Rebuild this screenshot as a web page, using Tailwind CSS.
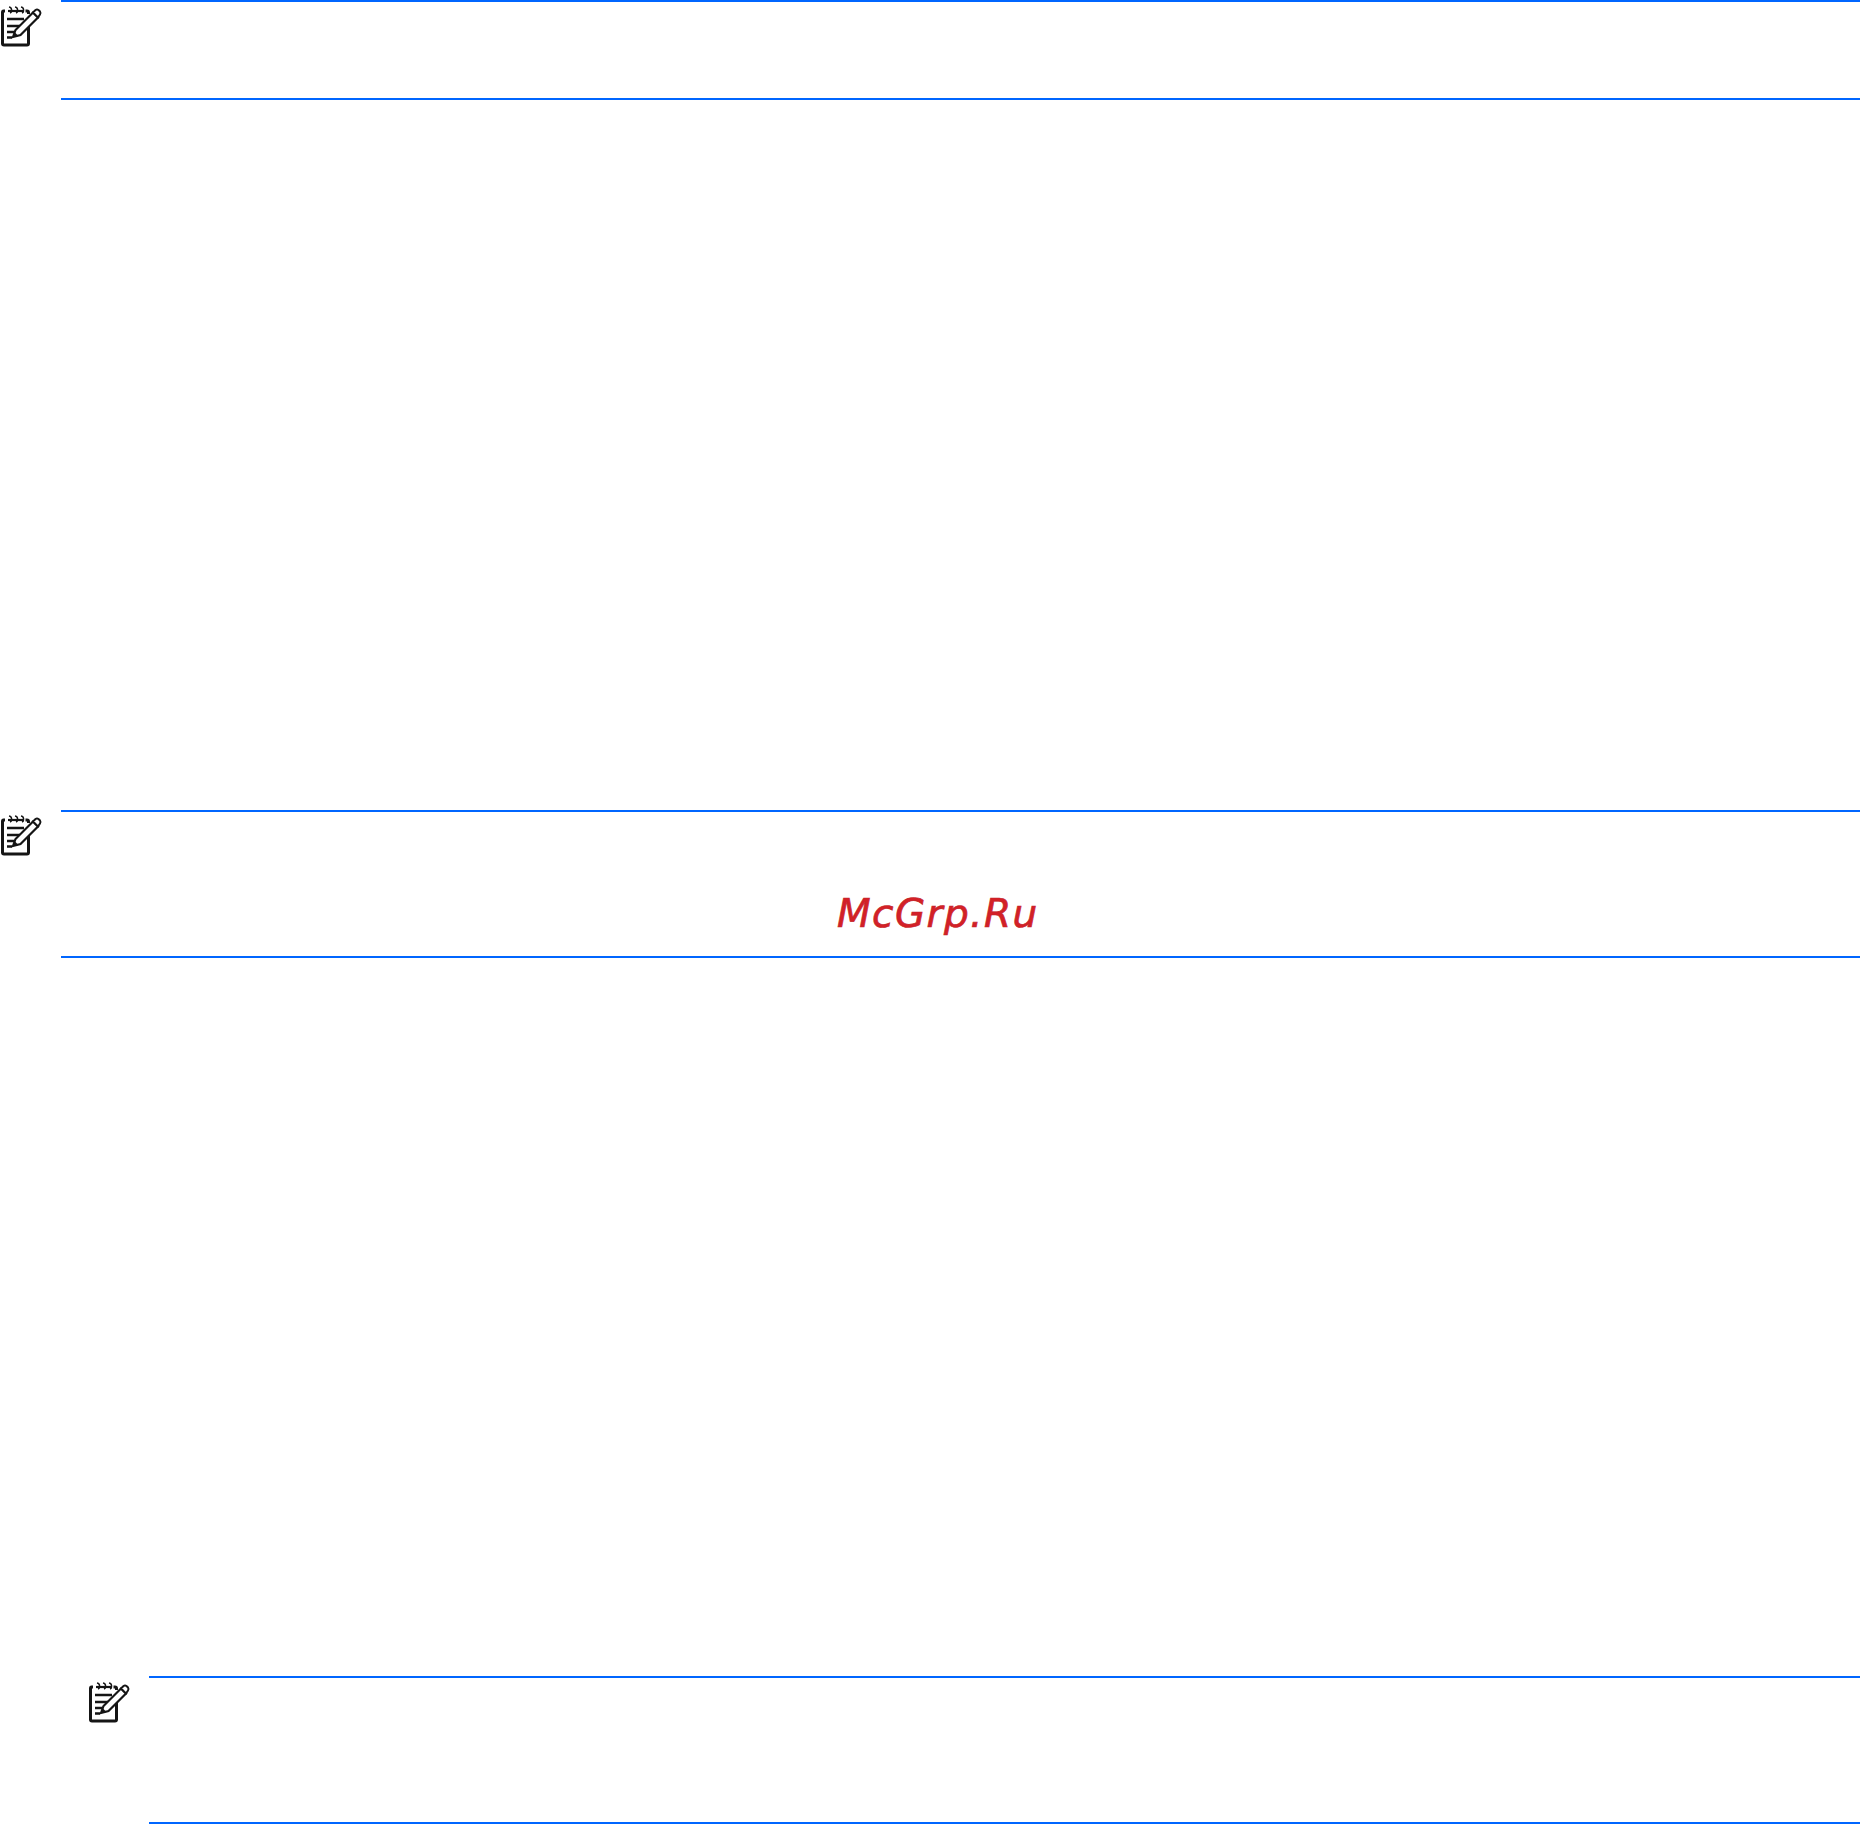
<!DOCTYPE html>
<html>
<head>
<meta charset="utf-8">
<script src="https://cdn.jsdelivr.net/npm/@tailwindcss/browser@4"></script>
</head>
<body class="bg-white">
<svg width="0" height="0" class="absolute">
  <defs>
    <g id="note">
      <path d="M5 11 H3.5 Q2.5 11 2.5 12.5 V43.5 Q2.5 45 4 45 H27 Q28.5 45 28.5 43.5 V24" fill="none" stroke="#151515" stroke-width="3"/>
      <path d="M25.5 11 H27 Q28.5 11 28.5 12.5 V14" fill="none" stroke="#151515" stroke-width="3"/>
      <path d="M8 11 H24" stroke="#151515" stroke-width="2.2"/>
      <path d="M9 7 Q12 7.5 11.5 11 Q11.5 12.5 10 13 M15 7 Q18 7.5 17.5 11 Q17.5 12.5 16 13 M21 7 Q24 7.5 23.5 11 Q23.5 12.5 22 13" fill="none" stroke="#151515" stroke-width="1.5"/>
      <path d="M7 19 H24 M7 26 H21 M7 32 H16 M7 37.5 H12" stroke="#151515" stroke-width="2.6"/>
      <path d="M13 37 L15.5 30 L33 12.5 L38 17.5 L20.5 35 Z" fill="#fff" stroke="#151515" stroke-width="2.2"/>
      <path d="M33 12.5 L35.5 10 Q37 9 38.5 10 L40 11.5 Q41 13 40 14.5 L38 17.5 Z" fill="#fff" stroke="#151515" stroke-width="2"/>
      <path d="M13 37 L14.5 32 L18.5 36 Z" fill="#151515"/>
    </g>
  </defs>
</svg>
<main class="w-[1860px] h-[1824px] flex flex-col overflow-hidden relative" style="font-family:'DejaVu Sans',sans-serif">
  <section class="flex h-[100px] shrink-0">
    <svg class="w-[61px] h-[100px] shrink-0" viewBox="0 0 61 100"><use href="#note"/></svg>
    <div class="flex-1 border-y-2 border-[#0066ff]"></div>
  </section>
  <section class="flex h-[148px] shrink-0 mt-[710px]">
    <svg class="w-[61px] h-[148px] shrink-0" viewBox="0 0 61 148"><use href="#note" y="-1"/></svg>
    <div class="flex-1 border-y-2 border-[#0066ff]"></div>
  </section>
  <section class="flex h-[148px] shrink-0 mt-[718px] pl-[88px]">
    <svg class="w-[61px] h-[148px] shrink-0" viewBox="0 0 61 148"><use href="#note"/></svg>
    <div class="flex-1 border-y-2 border-[#0066ff]"></div>
  </section>
  <div class="absolute left-[837px] top-[889px] text-[39px] leading-[50px] italic text-[#d42027] tracking-[1.4px] [-webkit-text-stroke:0.7px_#c4252a]">McGrp.Ru</div>
</main>
</body>
</html>
